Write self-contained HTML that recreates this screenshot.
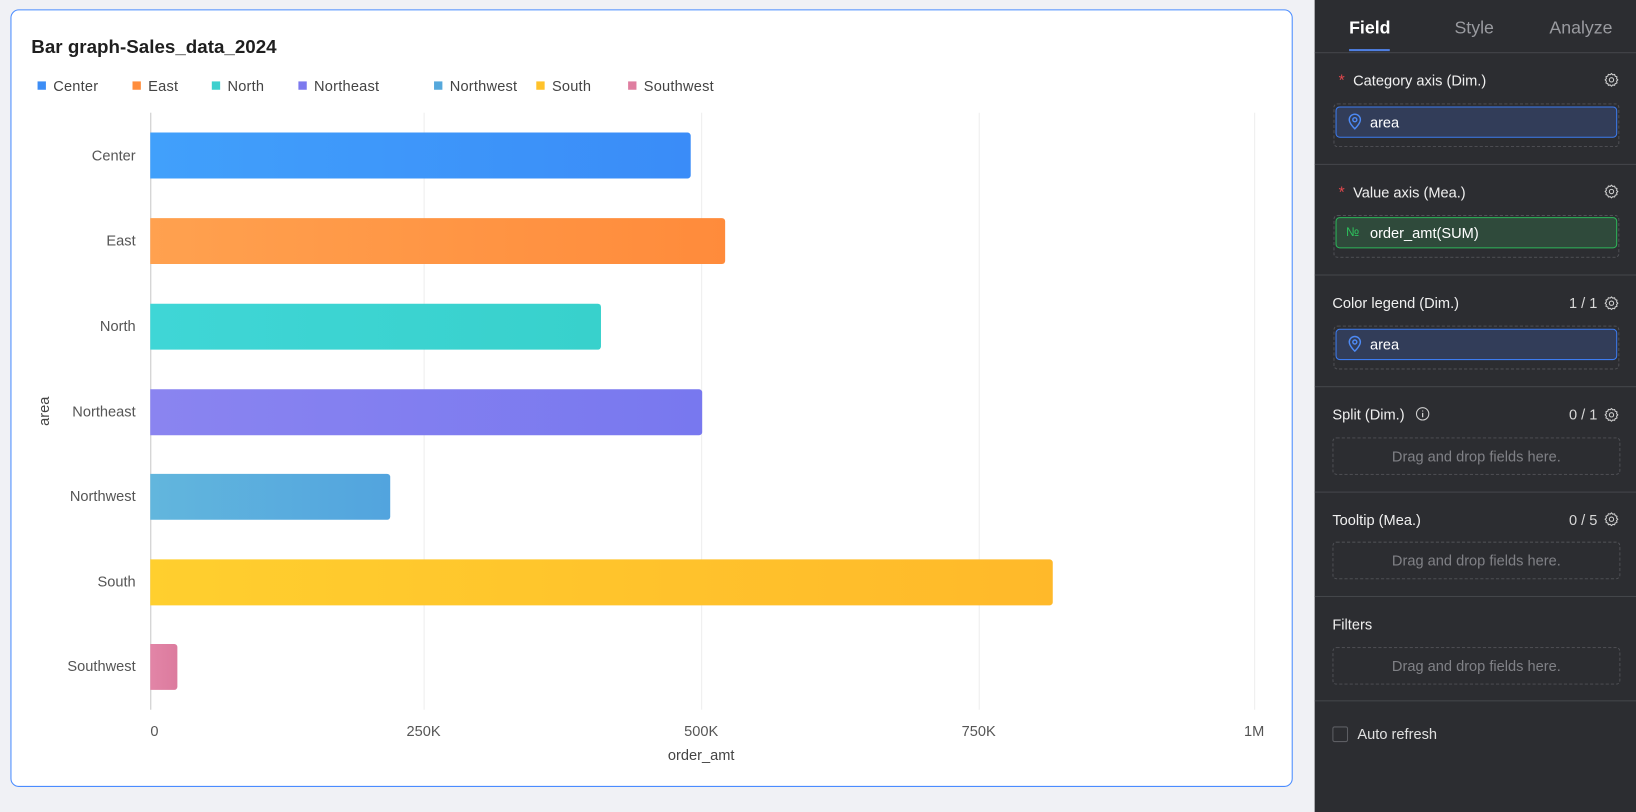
<!DOCTYPE html>
<html><head><meta charset="utf-8"><style>
*{box-sizing:border-box;margin:0;padding:0}
html,body{width:1636px;height:812px;overflow:hidden;background:#f0f1f5;font-family:"Liberation Sans",Arial,sans-serif}
#w{position:absolute;left:0;top:0;width:1568px;height:778px;transform:scale(1.04337,1.0437);transform-origin:0 0}
.a{position:absolute}
.card{left:10px;top:9px;width:1229px;height:745px;background:#fff;border:1px solid #4a8cff;border-radius:8px}
.title{left:30px;top:35px;font-size:18px;font-weight:bold;color:#1f1f1f}
.lg{top:74px;font-size:14px;color:#444;white-space:nowrap;letter-spacing:0.2px}
.lg i{display:inline-block;width:8px;height:8px;margin-right:7px;vertical-align:1px}
.cat{right:1438px;font-size:14px;color:#555;text-align:right;white-space:nowrap}
.grid{top:108px;width:1px;height:572px;background:#eeeeee}
.bar{left:144px;height:44px;border-radius:0 3px 3px 0}
.tick{top:692px;font-size:14px;color:#555;transform:translateX(-50%)}
.panel{left:1260px;top:0;width:308px;height:778px;background:#2c2d31}
.tab{top:17px;font-size:17px;color:#9a9ba0}
.hd{left:1277px;font-size:14px;color:#f0f0f0;white-space:nowrap}
.st{color:#e5484d;margin:0 8px 0 6px;font-size:15px}
.cnt{right:24px;font-size:14px;color:#d8d8d8;white-space:nowrap}
.div{left:1260px;width:308px;height:1px;background:#45464b}
.dz{left:1278px;width:274px;border:1px dashed #505156;border-radius:4px}
.drop{left:1277px;width:276px;height:36px;border:1px dashed #505156;border-radius:4px;color:#808186;font-size:14px;text-align:center;line-height:34px}
.fld{left:1280px;width:270px;height:30px;border-radius:4px;color:#fff;font-size:14px;line-height:28px;padding-left:32px}
.blue{background:#323d59;border:1px solid #3d7cf0}
.green{background:#2f4a3b;border:1px solid #2db65a}
</style></head><body><div id="w">
<div class="a card"></div>
<div class="a title">Bar graph-Sales_data_2024</div>
<div class="a lg" style="left:36px"><i style="background:#3d8df5"></i>Center</div>
<div class="a lg" style="left:127px"><i style="background:#ff8d3d"></i>East</div>
<div class="a lg" style="left:203px"><i style="background:#3dd0ce"></i>North</div>
<div class="a lg" style="left:286px"><i style="background:#7c79ee"></i>Northeast</div>
<div class="a lg" style="left:416px"><i style="background:#55a8dc"></i>Northwest</div>
<div class="a lg" style="left:514px"><i style="background:#ffc22a"></i>South</div>
<div class="a lg" style="left:602px"><i style="background:#df7ea0"></i>Southwest</div>

<div class="a grid" style="left:406px"></div>
<div class="a grid" style="left:672px"></div>
<div class="a grid" style="left:938px"></div>
<div class="a grid" style="left:1202px"></div>
<div class="a" style="left:144px;top:108px;width:1px;height:572px;background:#c8c8c8"></div>

<div class="a bar" style="top:127px;width:518px;background:linear-gradient(90deg,#41a0fb,#3a8cf8)"></div>
<div class="a bar" style="top:209px;width:551px;background:linear-gradient(90deg,#ffa14f,#ff8b3b)"></div>
<div class="a bar" style="top:291px;width:432px;background:linear-gradient(90deg,#3fd6d6,#38d1cc)"></div>
<div class="a bar" style="top:373px;width:529px;background:linear-gradient(90deg,#8a84f0,#7878ef)"></div>
<div class="a bar" style="top:454px;width:230px;background:linear-gradient(90deg,#62b6dd,#52a4de)"></div>
<div class="a bar" style="top:536px;width:865px;background:linear-gradient(90deg,#ffcf2e,#ffb92a)"></div>
<div class="a bar" style="top:617px;width:26px;background:linear-gradient(90deg,#e285a7,#dc7b9e)"></div>

<div class="a cat" style="top:141px">Center</div>
<div class="a cat" style="top:222px">East</div>
<div class="a cat" style="top:304px">North</div>
<div class="a cat" style="top:386px">Northeast</div>
<div class="a cat" style="top:467px">Northwest</div>
<div class="a cat" style="top:549px">South</div>
<div class="a cat" style="top:630px">Southwest</div>
<div class="a" style="left:42px;top:394px;font-size:14px;color:#444;transform:translate(-50%,-50%) rotate(-90deg)">area</div>

<div class="a tick" style="left:148px">0</div>
<div class="a tick" style="left:406px">250K</div>
<div class="a tick" style="left:672px">500K</div>
<div class="a tick" style="left:938px">750K</div>
<div class="a tick" style="left:1202px">1M</div>
<div class="a tick" style="left:672px;top:715px;color:#444">order_amt</div>

<div class="a panel"></div>
<div class="a tab" style="left:1293px;color:#fff;font-weight:bold">Field</div>
<div class="a" style="left:1293px;top:47px;width:39px;height:2px;background:#4f7fe2"></div>
<div class="a tab" style="left:1394px">Style</div>
<div class="a tab" style="left:1485px">Analyze</div>
<div class="a div" style="top:50px"></div>

<svg width="0" height="0" style="position:absolute"><defs>
<symbol id="g" viewBox="0 0 16 16"><path d="M8 1.5l1.3 1.4 1.9-.4.6 1.8 1.8.6-.4 1.9L14.5 8l-1.3 1.3.4 1.9-1.8.6-.6 1.8-1.9-.4L8 14.5l-1.3-1.3-1.9.4-.6-1.8-1.8-.6.4-1.9L1.5 8l1.3-1.3-.4-1.9 1.8-.6.6-1.8 1.9.4z" fill="none" stroke="#cfcfcf" stroke-width="1.1" stroke-linejoin="round"/><circle cx="8" cy="8" r="2.2" fill="none" stroke="#cfcfcf" stroke-width="1.1"/></symbol>
<symbol id="p" viewBox="0 0 16 16"><path d="M8 14.5S3 9.8 3 6.3A5 5 0 0 1 13 6.3C13 9.8 8 14.5 8 14.5z" fill="none" stroke="#4d8af5" stroke-width="1.3"/><circle cx="8" cy="6.3" r="1.8" fill="none" stroke="#4d8af5" stroke-width="1.3"/></symbol>
</defs></svg>

<div class="a hd" style="top:69px"><span class="st">*</span>Category axis (Dim.)</div>
<svg class="a" style="left:1537px;top:69px" width="15" height="15"><use href="#g"/></svg>
<div class="a dz" style="top:99px;height:42px"></div>
<div class="a fld blue" style="top:102px">area</div>
<svg class="a" style="left:1290px;top:108px" width="17" height="17"><use href="#p"/></svg>
<div class="a div" style="top:157px"></div>

<div class="a hd" style="top:176px"><span class="st">*</span>Value axis (Mea.)</div>
<svg class="a" style="left:1537px;top:176px" width="15" height="15"><use href="#g"/></svg>
<div class="a dz" style="top:206px;height:41px"></div>
<div class="a fld green" style="top:208px">order_amt(SUM)</div>
<div class="a" style="left:1290px;top:215px;font-size:12px;color:#2dc15c">№</div>
<div class="a div" style="top:263px"></div>

<div class="a hd" style="top:282px">Color legend (Dim.)</div>
<div class="a cnt" style="top:282px;right:37px">1 / 1</div>
<svg class="a" style="left:1537px;top:283px" width="15" height="15"><use href="#g"/></svg>
<div class="a dz" style="top:312px;height:42px"></div>
<div class="a fld blue" style="top:315px">area</div>
<svg class="a" style="left:1290px;top:321px" width="17" height="17"><use href="#p"/></svg>
<div class="a div" style="top:370px"></div>

<div class="a hd" style="top:389px">Split (Dim.)</div>
<svg class="a" style="left:1356px;top:389px" width="15" height="15" viewBox="0 0 16 16"><circle cx="8" cy="8" r="6.3" fill="none" stroke="#cfcfcf" stroke-width="1.1"/><path d="M8 7v4.5M8 4.6v1" stroke="#cfcfcf" stroke-width="1.3"/></svg>
<div class="a cnt" style="top:389px;right:37px">0 / 1</div>
<svg class="a" style="left:1537px;top:390px" width="15" height="15"><use href="#g"/></svg>
<div class="a drop" style="top:419px">Drag and drop fields here.</div>
<div class="a div" style="top:471px"></div>

<div class="a hd" style="top:490px">Tooltip (Mea.)</div>
<div class="a cnt" style="top:490px;right:37px">0 / 5</div>
<svg class="a" style="left:1537px;top:490px" width="15" height="15"><use href="#g"/></svg>
<div class="a drop" style="top:519px">Drag and drop fields here.</div>
<div class="a div" style="top:571px"></div>

<div class="a hd" style="top:590px">Filters</div>
<div class="a drop" style="top:620px">Drag and drop fields here.</div>
<div class="a div" style="top:671px"></div>

<div class="a" style="left:1277px;top:696px;width:15px;height:15px;border:1px solid #5d5e63;border-radius:2px"></div>
<div class="a hd" style="left:1301px;top:695px;color:#e0e0e0">Auto refresh</div>
</div></body></html>
